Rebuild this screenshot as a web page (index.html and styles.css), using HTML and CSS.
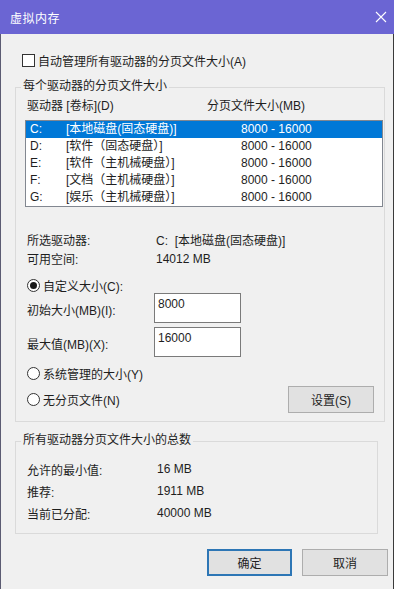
FILE: index.html
```html
<!DOCTYPE html>
<html lang="zh-CN">
<head>
  <meta charset="UTF-8">
  <meta name="viewport" content="width=device-width, initial-scale=1.0">
  <title>虚拟内存</title>
  <link rel="stylesheet" href="styles.css">
</head>
<body>
<div class="window">
  <div class="titlebar">
    <span class="title">虚拟内存</span>
    <svg class="close" width="12" height="12" viewBox="0 0 12 12">
      <path d="M1 1 L11 11 M11 1 L1 11" stroke="#fff" stroke-width="1.1" fill="none"/>
    </svg>
  </div>

  <div class="content">
    <label class="check-row">
      <span class="checkbox"></span>
      <span>自动管理所有驱动器的分页文件大小(A)</span>
    </label>

    <fieldset class="group group-drives">
      <legend>每个驱动器的分页文件大小</legend>
      <div class="group-body">
        <div class="list-head">
          <span>驱动器 [卷标](D)</span>
          <span>分页文件大小(MB)</span>
        </div>
        <div class="listbox">
          <div class="list-row selected"><span>C:</span><span>[本地磁盘(固态硬盘)]</span><span>8000 - 16000</span></div>
          <div class="list-row"><span>D:</span><span>[软件（固态硬盘）]</span><span>8000 - 16000</span></div>
          <div class="list-row"><span>E:</span><span>[软件（主机械硬盘）]</span><span>8000 - 16000</span></div>
          <div class="list-row"><span>F:</span><span>[文档（主机械硬盘）]</span><span>8000 - 16000</span></div>
          <div class="list-row"><span>G:</span><span>[娱乐（主机械硬盘）]</span><span>8000 - 16000</span></div>
        </div>

        <div class="info">
          <span>所选驱动器:</span><span>C:&nbsp; [本地磁盘(固态硬盘)]</span>
          <span>可用空间:</span><span>14012 MB</span>
        </div>

        <label class="radio-row first">
          <span class="radio checked"></span>
          <span>自定义大小(C):</span>
        </label>

        <div class="size-form">
          <span>初始大小(MB)(I):</span>
          <input type="text" value="8000">
          <span>最大值(MB)(X):</span>
          <input type="text" value="16000">
        </div>

        <label class="radio-row">
          <span class="radio"></span>
          <span>系统管理的大小(Y)</span>
        </label>

        <div class="set-row">
          <label class="radio-row inline">
            <span class="radio"></span>
            <span>无分页文件(N)</span>
          </label>
          <button class="btn btn-set">设置(S)</button>
        </div>
      </div>
    </fieldset>

    <fieldset class="group group-total">
      <legend>所有驱动器分页文件大小的总数</legend>
      <div class="totals">
        <span>允许的最小值:</span><span>16 MB</span>
        <span>推荐:</span><span>1911 MB</span>
        <span>当前已分配:</span><span>40000 MB</span>
      </div>
    </fieldset>

    <div class="actions">
      <button class="btn btn-ok">确定</button>
      <button class="btn">取消</button>
    </div>
  </div>
</div>
</body>
</html>
```

FILE: styles.css
```css
body {
  margin: 0;
  background: #fff;
  font-family: "Liberation Sans", "Noto Sans CJK SC", sans-serif;
  font-size: 12px;
  color: #1e1e1e;
}
.window {
  width: 394px;
  height: 589px;
  display: flex;
  flex-direction: column;
}
.titlebar {
  height: 34px;
  background: #6b65d3;
  color: #fff;
  display: flex;
  align-items: center;
  justify-content: space-between;
  padding: 0 7px 0 10px;
  flex-shrink: 0;
}
.title {
  font-size: 12px;
  letter-spacing: 0.5px;
}
.content {
  flex: 1;
  background: #f0f0f0;
  border-left: 1px solid #5b5b72;
  border-right: 1px solid #3a3a3a;
  padding: 0 8px 0 14px;
}
.check-row {
  display: flex;
  align-items: center;
  gap: 3px;
  height: 13px;
  margin-top: 20px;
  padding-left: 7px;
}
.checkbox {
  width: 11px;
  height: 11px;
  border: 1px solid #333;
  background: #fff;
}
.group {
  margin: 12px 0 0;
  padding: 0;
  border: 1px solid #dadada;
  min-width: 0;
}
.group legend {
  margin-left: 5px;
  padding: 0 2px 2px;
  line-height: 14px;
}
.group-body {
  padding: 3px 1px 8px 9px;
}
.list-head {
  display: grid;
  grid-template-columns: 180px 1fr;
  padding-left: 2px;
  line-height: 16px;
  margin-bottom: 6px;
}
.listbox {
  border: 1px solid #828790;
  background: #fff;
}
.list-row {
  display: grid;
  grid-template-columns: 36px 175px 1fr;
  height: 17px;
  line-height: 17px;
  padding-left: 4px;
}
.list-row.selected {
  background: #0078d7;
  color: #fff;
}
.info {
  display: grid;
  grid-template-columns: 129px 1fr;
  grid-auto-rows: 19px;
  align-items: center;
  padding-left: 2px;
  margin-top: 23px;
}
.radio-row {
  display: flex;
  align-items: center;
  gap: 3px;
  height: 16px;
  padding-left: 2px;
  margin-top: 8px;
}
.radio-row.first {
  margin-top: 9px;
}
.radio-row.inline {
  margin-top: 0;
}
.radio {
  width: 11px;
  height: 11px;
  border: 1px solid #333;
  border-radius: 50%;
  background: #fff;
  display: flex;
  align-items: center;
  justify-content: center;
}
.radio.checked::after {
  content: "";
  width: 7px;
  height: 7px;
  border-radius: 50%;
  background: #1a1a1a;
}
.size-form {
  display: grid;
  grid-template-columns: 127px 87px;
  grid-auto-rows: 30px;
  row-gap: 4px;
  align-items: center;
  padding-left: 2px;
}
.size-form span {
  padding-top: 3px;
}
.size-form input {
  box-sizing: border-box;
  width: 87px;
  height: 30px;
  margin: 0;
  border: 1px solid #7a7a7a;
  background: #fff;
  font: inherit;
  color: #1e1e1e;
  padding: 0 3px 8px;
}
.set-row {
  display: flex;
  align-items: center;
  justify-content: space-between;
  margin-top: 5px;
  padding-right: 9px;
}
.btn {
  box-sizing: border-box;
  height: 27px;
  background: #e1e1e1;
  border: 1px solid #adadad;
  font: inherit;
  color: #1e1e1e;
  padding: 0;
}
.btn-set {
  width: 86px;
}
.group-total {
  margin: 11px 7px 0 0;
}
.totals {
  display: grid;
  grid-template-columns: 130px 1fr;
  grid-auto-rows: 22px;
  align-items: center;
  padding: 9px 0 9px 11px;
}
.actions {
  display: flex;
  justify-content: flex-end;
  gap: 10px;
  margin: 15px -3px 0 0;
}
.actions .btn {
  width: 86px;
}
.actions .btn-ok {
  width: 85px;
  border: 2px solid #2d76b5;
}
```
